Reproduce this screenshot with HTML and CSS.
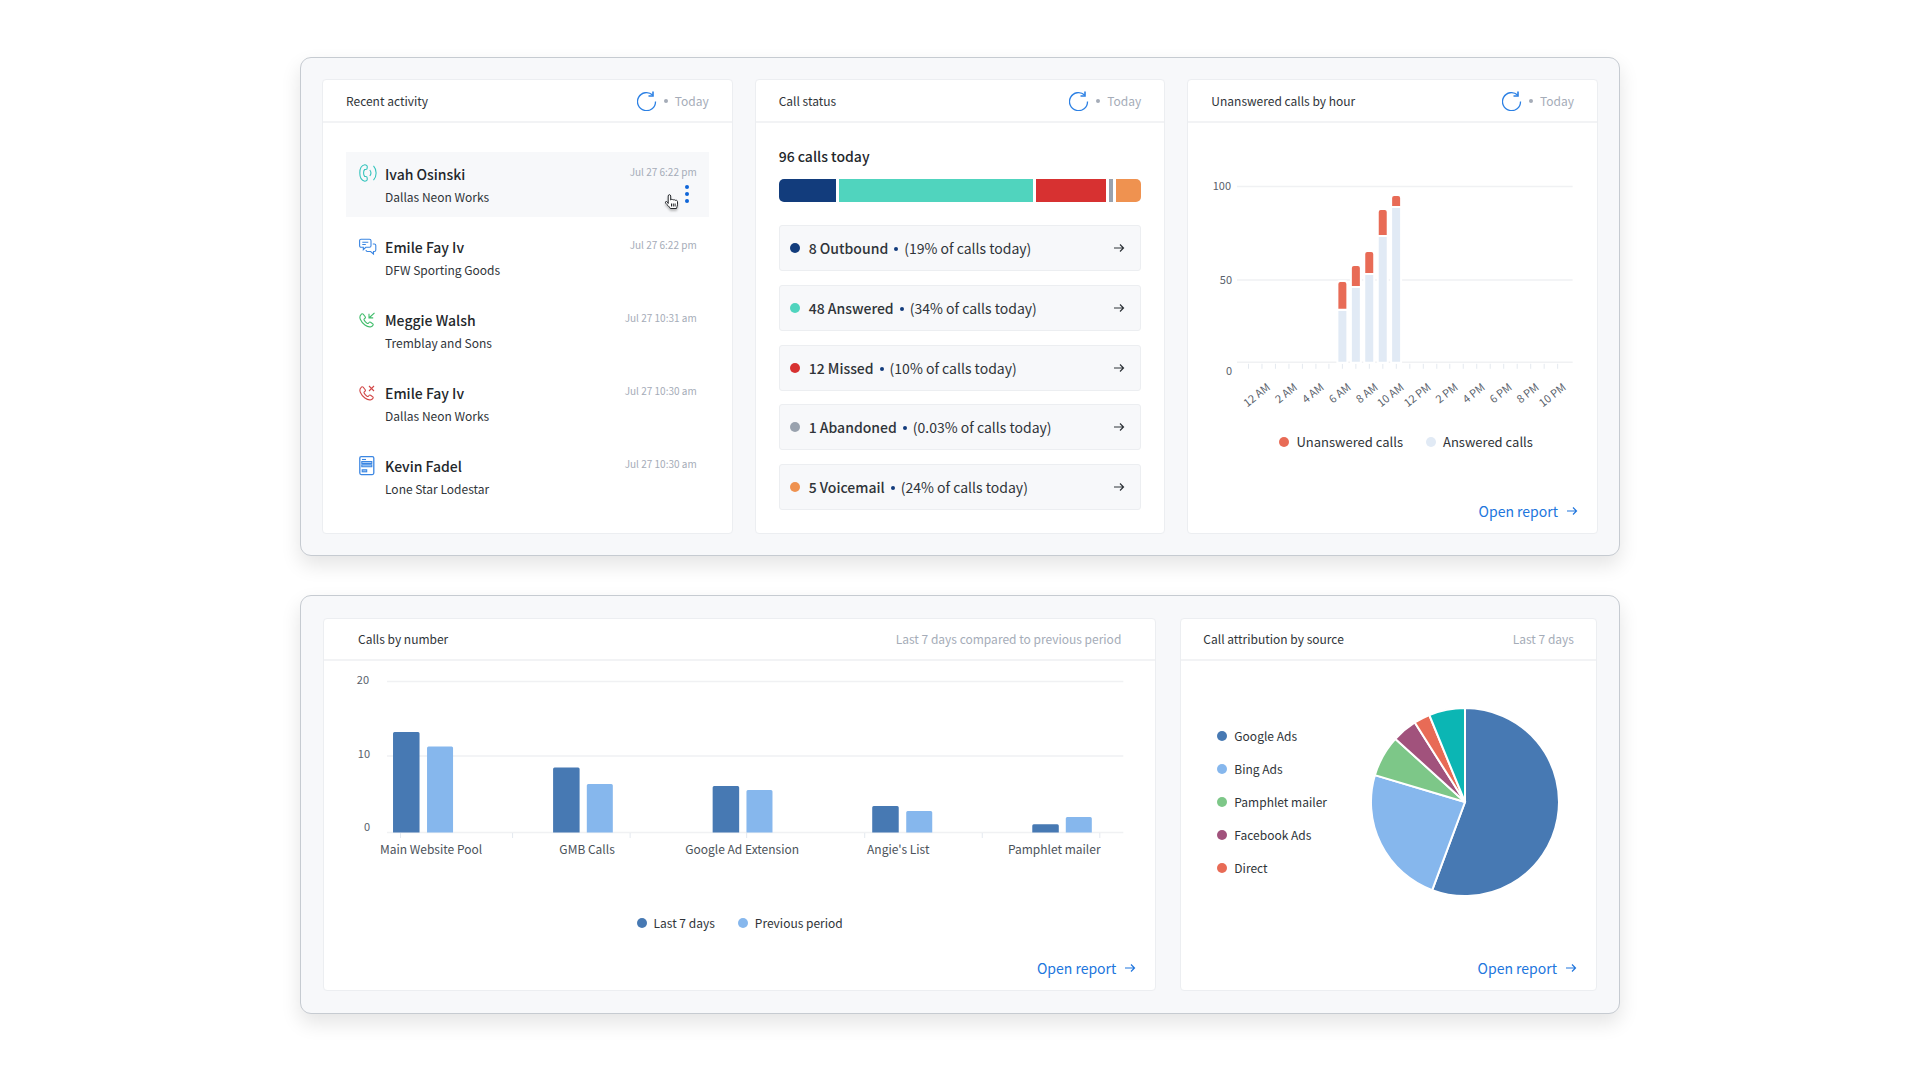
FILE: index.html
```html
<!DOCTYPE html>
<html lang="en">
<head>
<meta charset="utf-8">
<meta name="viewport" content="width=device-width, initial-scale=1">
<title>Call dashboard</title>
<link rel="stylesheet" href="styles.css">
</head>
<body>
<svg class="sprite" aria-hidden="true">
  <symbol id="refresh" viewBox="0 0 20 20"><path d="M18.5 10.5A9 9 0 1 1 15.6 4"/><path d="M16 .5V5h-4.500" stroke-width="1.600"/></symbol>
  <symbol id="arrow" viewBox="0 0 12 10"><path d="M1 5h9.500M7 1.500L10.500 5 7 8.500"/></symbol>
  <symbol id="handset" viewBox="0 0 18 18"><path d="M4.200 3.200c-.7-.6-1.500-.5-2 .1C.8 4.700.5 6.300 1.300 8.200c.9 2.100 2.500 4.200 4.600 5.800 2 1.500 4.300 2.300 6.200 1.700.9-.3 1.700-1 2-1.700.2-.5 0-1-.5-1.300l-2-1.400c-.6-.4-1.200-.3-1.600.2l-.6.7c-.3.400-.7.400-1.100.2-1.200-.7-2.600-2.200-3.200-3.500-.2-.4-.1-.8.200-1.100l.7-.6c.5-.4.500-1 .2-1.500z"/></symbol>
</svg>
<main class="page">
  <section class="panel panel-today" aria-label="Today">
    <article class="card">
      <header class="card-head">
        <h2>Recent activity</h2>
        <div class="period"><button class="icon-button" type="button" aria-label="Refresh recent activity"><svg class="refresh"><use href="#refresh"/></svg></button><i></i><span>Today</span></div>
      </header>
      <ul class="activity">
        <li class="entry active">
          <svg class="entry-icon teal" viewBox="0 0 18 18"><path d="M5.800.8C2.500 1.400.8 5 .8 9s1.700 7.600 5 8.200c.8.100 2.400-.6 2.400-1.400V14c0-.9-.6-1.500-1.500-1.500h-1C4.200 11 4.200 7 5.700 5.500h1c.9 0 1.500-.6 1.500-1.500V2.200C8.200 1.400 6.600.7 5.800.8zM10.800 6c1.400 1.800 1.400 4.200 0 6M14.500 1.800c3.500 3.900 3.500 10.500 0 14.400"/></svg>
          <div class="who"><h3>Ivah Osinski</h3><p>Dallas Neon Works</p></div>
          <div class="when"><time>Jul 27 6:22 pm</time>
            <button class="more" type="button" aria-label="More actions"><svg viewBox="0 0 4 18"><circle cx="2" cy="2" r="2"/><circle cx="2" cy="9" r="2"/><circle cx="2" cy="16" r="2"/></svg></button>
          </div>
          <svg class="pointer" viewBox="0 0 18 18"><path d="M5.200 10.500V3c0-1.800 2.300-1.800 2.500 0v4c.5-.9 2-.8 2.300.1.600-.7 1.900-.5 2.200.3.700-.5 2.300-.1 2.300 1.200v3.200c0 1.600-.9 2.200-1 3.700H7.300C6.500 13.500 4 12 2.700 10.200 1.700 8.500 3.400 7.900 4.300 9z"/><path d="M8.500 10.500v3M10.300 10.500v3M12.100 10.500v3"/></svg>
        </li>
        <li class="entry">
          <svg class="entry-icon blue" viewBox="0 -1 18 18"><path d="M2 1.300h8.500c.8 0 1.500.6 1.500 1.500v5c0 .8-.7 1.500-1.500 1.500H6.800L4.300 11.700V9.300H2C1.200 9.300.6 8.600.6 7.800v-5C.6 1.900 1.200 1.300 2 1.300zM3.300 4.200h6M3.300 6.500h3.500M13.800 6h1.500c.9 0 1.500.7 1.500 1.500V12c0 .8-.6 1.500-1.500 1.500h-.8V16L11.600 13.500H8.500c-.8 0-1.500-.6-1.500-1.500"/></svg>
          <div class="who"><h3>Emile Fay Iv</h3><p>DFW Sporting Goods</p></div>
          <div class="when"><time>Jul 27 6:22 pm</time></div>
        </li>
        <li class="entry">
          <svg class="entry-icon green" viewBox="0 -1 18 18"><use href="#handset" width="18" height="18"/><path d="M15.500 1.800L10.500 6.500M10 2.700v4.200h4.200"/></svg>
          <div class="who"><h3>Meggie Walsh</h3><p>Tremblay and Sons</p></div>
          <div class="when"><time>Jul 27 10:31 am</time></div>
        </li>
        <li class="entry">
          <svg class="entry-icon red" viewBox="0 -1 18 18"><use href="#handset" width="18" height="18"/><path d="M10 2l5 5M15 2l-5 5"/></svg>
          <div class="who"><h3>Emile Fay Iv</h3><p>Dallas Neon Works</p></div>
          <div class="when"><time>Jul 27 10:30 am</time></div>
        </li>
        <li class="entry">
          <svg class="entry-icon blue" viewBox="0 0 18 18"><rect x=".8" y=".6" width="14" height="18" rx="1.500" stroke-width="1.300"/><path d="M3 3.500h4"/><path d="M2.800 5.500h10v2h-10zM2.800 8.800h10v2h-10z" fill="#a9cbf5"/><rect x="3.200" y="13.800" width="4.500" height="2" fill="#a9cbf5"/></svg>
          <div class="who"><h3>Kevin Fadel</h3><p>Lone Star Lodestar</p></div>
          <div class="when"><time>Jul 27 10:30 am</time></div>
        </li>
      </ul>
    </article>

    <article class="card">
      <header class="card-head">
        <h2>Call status</h2>
        <div class="period"><button class="icon-button" type="button" aria-label="Refresh call status"><svg class="refresh"><use href="#refresh"/></svg></button><i></i><span>Today</span></div>
      </header>
      <div class="status">
        <h3>96 calls today</h3>
        <div class="split">
          <span class="navy" style="flex-grow:58"></span><span class="mint" style="flex-grow:194"></span><span class="crimson" style="flex-grow:71"></span><span class="grey" style="flex-grow:4"></span><span class="amber" style="flex-grow:25"></span>
        </div>
        <ul class="status-list">
          <li><a href="#outbound"><i class="dot navy"></i><b>8 Outbound</b><i class="sep"></i><span>(19% of calls today)</span><svg class="arrow"><use href="#arrow"/></svg></a></li>
          <li><a href="#answered"><i class="dot mint"></i><b>48 Answered</b><i class="sep"></i><span>(34% of calls today)</span><svg class="arrow"><use href="#arrow"/></svg></a></li>
          <li><a href="#missed"><i class="dot crimson"></i><b>12 Missed</b><i class="sep"></i><span>(10% of calls today)</span><svg class="arrow"><use href="#arrow"/></svg></a></li>
          <li><a href="#abandoned"><i class="dot grey"></i><b>1 Abandoned</b><i class="sep"></i><span>(0.03% of calls today)</span><svg class="arrow"><use href="#arrow"/></svg></a></li>
          <li><a href="#voicemail"><i class="dot amber"></i><b>5 Voicemail</b><i class="sep"></i><span>(24% of calls today)</span><svg class="arrow"><use href="#arrow"/></svg></a></li>
        </ul>
      </div>
    </article>

    <article class="card">
      <header class="card-head">
        <h2>Unanswered calls by hour</h2>
        <div class="period"><button class="icon-button" type="button" aria-label="Refresh unanswered calls"><svg class="refresh"><use href="#refresh"/></svg></button><i></i><span>Today</span></div>
      </header>
      <div class="hours">
        <svg class="chart" viewBox="0 0 363 250" role="img" aria-label="Unanswered and answered calls by hour">
          <path class="grid" d="M26 24.500H362M26 118H362M26 200.500H362"/>
          <path class="ticks" d="M37.500 202v5M51 202v5M64.500 202v5M78 202v5M91.500 202v5M105 202v5M118 202v5M131.500 202v5M145 202v5M158.500 202v5M172 202v5M185.500 202v5M199 202v5M212.500 202v5M226 202v5M239 202v5M252.500 202v5M266 202v5M279.500 202v5M293 202v5M306.500 202v5M320 202v5M333.500 202v5M347 202v5"/>
          <g class="axis end"><text x="20" y="28">100</text><text x="21" y="122">50</text><text x="21" y="213">0</text></g>
          <g class="answered">
            <path d="M126.500 148h10v53h-10zM140 125h10v76h-10zM153.400 112h10v89h-10zM166.900 74h10v127h-10zM180.300 45h10v156h-10z"/>
          </g>
          <g class="missed">
            <path d="M126.500 148v-26q0-3 3-3h4q3 0 3 3v26zM140 125v-19q0-3 3-3h4q3 0 3 3v19zM153.400 112v-20q0-3 3-3h4q3 0 3 3v20zM166.900 74v-24q0-3 3-3h4q3 0 3 3v24zM180.300 45v-9q0-3 3-3h4q3 0 3 3v9z"/>
          </g>
          <g class="axis end">
            <text transform="translate(60 227) rotate(-38)">12 AM</text><text transform="translate(87 227) rotate(-38)">2 AM</text><text transform="translate(114 227) rotate(-38)">4 AM</text><text transform="translate(141 227) rotate(-38)">6 AM</text><text transform="translate(168 227) rotate(-38)">8 AM</text><text transform="translate(194 227) rotate(-38)">10 AM</text><text transform="translate(221 227) rotate(-38)">12 PM</text><text transform="translate(248 227) rotate(-38)">2 PM</text><text transform="translate(275 227) rotate(-38)">4 PM</text><text transform="translate(302 227) rotate(-38)">6 PM</text><text transform="translate(329 227) rotate(-38)">8 PM</text><text transform="translate(356 227) rotate(-38)">10 PM</text>
          </g>
        </svg>
        <ul class="legend large"><li><i class="dot coral"></i>Unanswered calls</li><li><i class="dot pale"></i>Answered calls</li></ul>
      </div>
      <a class="report" href="#hours">Open report<svg class="arrow"><use href="#arrow"/></svg></a>
    </article>
  </section>

  <section class="panel panel-week" aria-label="Last 7 days">
    <article class="card wide">
      <header class="card-head"><h2>Calls by number</h2><div class="period">Last 7 days compared to previous period</div></header>
      <div class="numbers">
        <svg class="chart" viewBox="0 0 763 200" role="img" aria-label="Calls by number">
          <path class="grid" d="M29 20.500H765M29 95H765M29 171.500H765"/>
          <path class="ticks" d="M42.500 172v5M154.500 172v5M272 172v5M388.500 172v5M506.500 172v5M624 172v5M741.500 172v5"/>
          <g class="axis end"><text x="11" y="23">20</text><text x="12" y="97">10</text><text x="12" y="170">0</text></g>
          <g class="current"><path d="M35 171.500v-99q0-1.500 1.500-1.500h23.500q1.500 0 1.500 1.500v99zM195 171.500v-63.500q0-1.500 1.500-1.500h23.500q1.500 0 1.500 1.500v63.500zM354.500 171.500v-45q0-1.500 1.500-1.500h23.500q1.500 0 1.500 1.500v45zM514 171.500v-25q0-1.500 1.500-1.500h23.500q1.500 0 1.500 1.500v25zM674 171.500v-6.700q0-1.500 1.500-1.500h23.500q1.500 0 1.500 1.500v6.700z"/></g>
          <g class="previous"><path d="M69 171.500v-84.500q0-1.500 1.500-1.500h23q1.500 0 1.500 1.500v84.500zM228.700 171.500v-47q0-1.500 1.500-1.500h23q1.500 0 1.500 1.500v47zM388.300 171.500v-41q0-1.500 1.500-1.500h23q1.500 0 1.500 1.500v41zM548 171.500v-20q0-1.500 1.500-1.500h23q1.500 0 1.500 1.500v20zM707.500 171.500v-14q0-1.500 1.500-1.500h23q1.500 0 1.500 1.500v14z"/></g>
          <g class="names"><text x="73" y="193">Main Website Pool</text><text x="229" y="193">GMB Calls</text><text x="384" y="193">Google Ad Extension</text><text x="540" y="193">Angie's List</text><text x="696" y="193">Pamphlet mailer</text></g>
        </svg>
        <ul class="legend"><li><i class="dot steel"></i>Last 7 days</li><li><i class="dot sky"></i>Previous period</li></ul>
      </div>
      <a class="report" href="#numbers">Open report<svg class="arrow"><use href="#arrow"/></svg></a>
    </article>

    <article class="card">
      <header class="card-head"><h2>Call attribution by source</h2><div class="period">Last 7 days</div></header>
      <div class="sources">
        <ul class="source-list"><li><i class="dot steel"></i>Google Ads</li><li><i class="dot sky"></i>Bing Ads</li><li><i class="dot leaf"></i>Pamphlet mailer</li><li><i class="dot plum"></i>Facebook Ads</li><li><i class="dot coral"></i>Direct</li></ul>
        <svg class="pie" viewBox="-94 -94 188 188" role="img" aria-label="Call attribution by source">
          <path fill="#4779b3" d="M0 0V-94A94 94 0 1 1 -32.800 88.100z"/>
          <path fill="#86b7ed" d="M0 0L-32.800 88.100A94 94 0 0 1 -90.100 -26.900z"/>
          <path fill="#7dc788" d="M0 0L-90.100 -26.900A94 94 0 0 1 -69.600 -63.100z"/>
          <path fill="#a1527c" d="M0 0L-69.600 -63.100A94 94 0 0 1 -50.200 -79.500z"/>
          <path fill="#e86b56" d="M0 0L-50.200 -79.500A94 94 0 0 1 -35.700 -87z"/>
          <path fill="#0bb6b4" d="M0 0L-35.700 -87A94 94 0 0 1 0 -94z"/>
        </svg>
      </div>
      <a class="report" href="#sources">Open report<svg class="arrow"><use href="#arrow"/></svg></a>
    </article>
  </section>
</main>
</body>
</html>
```
FILE: styles.css
```css
* { box-sizing: border-box; }
body {
  margin: 0;
  background: #fff;
  color: #2f3439;
  font: 12px/20px "Noto Sans CJK SC", "Noto Sans", sans-serif;
}
h2, h3, p, ul { margin: 0; padding: 0; }
ul { list-style: none; }
button { padding: 0; border: 0; background: none; cursor: pointer; }
a { color: inherit; text-decoration: none; }
svg { display: block; fill: none; }
.sprite { position: absolute; width: 0; height: 0; }

.page {
  display: flex;
  flex-direction: column;
  gap: 39px;
  max-width: 1368px;
  margin: 0 auto;
  padding: 57px 24px;
}
.panel {
  display: grid;
  border: 1px solid #c6cbd1;
  border-radius: 11px;
  background: #f7f8fa;
  box-shadow: 0 9px 20px rgba(0, 0, 0, .11);
}
.panel-today { grid-template-columns: repeat(3, 1fr); gap: 22px; padding: 21px; }
.panel-week { grid-template-columns: 2fr 1fr; gap: 24px; padding: 22px; }

.card {
  display: flex;
  flex-direction: column;
  min-width: 0;
  border: 1px solid #eceef1;
  border-radius: 4px;
  background: #fff;
}
.panel-today .card { min-height: 455px; }
.panel-week .card { min-height: 373px; }
.card-head {
  display: flex;
  align-items: center;
  justify-content: space-between;
  height: 43px;
  padding: 0 23px;
  border-bottom: 2px solid #f2f3f5;
}
.panel-week .card-head { height: 42px; padding: 0 22px; }
.panel-week .wide .card-head { padding: 0 34px; }
h2 { font-size: 12px; font-weight: 400; }
.period { display: flex; align-items: center; color: #a5acb8; }
.period i { width: 4px; height: 4px; margin: 0 7px; border-radius: 50%; background: #a5acb8; }
.refresh { width: 20px; height: 20px; stroke: #2c80e4; stroke-width: 1.300; }

.activity { display: flex; flex-direction: column; gap: 8px; padding: 29px 23px 20px; }
.entry { position: relative; display: flex; height: 65px; padding: 12px; }
.entry.active { background: #f7f8fa; }
.entry-icon { width: 18px; height: 18px; margin: 0 8px 0 1px; stroke: currentColor; stroke-width: 1.100; overflow: visible; }
.teal { color: #35c4bd; }
.blue { color: #3b86e2; }
.green { color: #42bd6c; }
.red { color: #d24848; }
.who { flex: 1; }
h3 { color: #23272b; font-size: 14px; font-weight: 500; }
.who p { margin-top: 3px; }
.when { display: flex; flex-direction: column; align-items: flex-end; color: #a5acb8; font-size: 10px; line-height: 16px; }
.more { margin: 5px 8px 0 0; }
.more svg { width: 4px; height: 18px; fill: #0f66d8; }
.pointer { position: absolute; right: 28px; bottom: 6px; width: 18px; height: 18px; fill: #fff; stroke: #26292d; filter: drop-shadow(0 2px 1px rgba(0, 0, 0, .25)); }

.status { display: flex; flex: 1; flex-direction: column; padding: 23px; }
.split { display: flex; gap: 3px; height: 23px; margin-top: 13px; border-radius: 5px; overflow: hidden; }
.split span { flex-basis: 0; }
.status-list { display: flex; flex: 1; flex-direction: column; justify-content: space-between; margin-top: 23px; }
.status-list a {
  display: flex;
  align-items: center;
  height: 46px;
  padding: 0 15px 0 10px;
  border: 1px solid #eceef1;
  border-radius: 3px;
  background: #f7f8fa;
  font-size: 14px;
}
.status-list b { margin-left: 9px; font-weight: 500; }
.sep { width: 4px; height: 4px; margin: 2px 6px 0; border-radius: 50%; background: #123c7c; }
.arrow { width: 12px; height: 10px; stroke: currentColor; stroke-width: 1.200; }
.status-list .arrow { margin-left: auto; }

.dot { flex: none; width: 10px; height: 10px; border-radius: 50%; }
.navy { background: #123c7c; }
.mint { background: #50d4be; }
.crimson { background: #d73131; }
.grey { background: #99a2ae; }
.amber { background: #ef9250; }
.coral { background: #e86b56; }
.pale { background: #e1eaf5; }
.steel { background: #4779b3; }
.sky { background: #86b7ed; }
.leaf { background: #7dc788; }
.plum { background: #a1527c; }

.chart { width: 100%; height: auto; overflow: visible; }
.grid { stroke: #f0f1f3; stroke-width: 1.500; }
.ticks { stroke: #e4e9ef; }
.axis { fill: #59616b; font-size: 11px; }
.end { text-anchor: end; }
.names { fill: #4b525a; font-size: 12px; text-anchor: middle; }
.answered, .missed { stroke: #fff; stroke-width: 2; }
.answered { fill: #e1eaf5; }
.missed { fill: #e86b56; }
.current { fill: #4779b3; }
.previous { fill: #86b7ed; }

.hours { padding: 39px 23px 0; }
.legend { display: flex; justify-content: center; gap: 23px; }
.legend li { display: flex; align-items: center; gap: 7px; }
.legend.large { padding: 20px 0 0 27px; font-size: 13px; }
.numbers { padding: 0 34px; }
.numbers .legend { padding-top: 52px; }
.report {
  display: flex;
  align-items: center;
  align-self: flex-end;
  gap: 8px;
  margin: auto 19px 12px 0;
  color: #2176dd;
  font-size: 14px;
}
.sources { display: flex; align-items: center; justify-content: space-between; padding: 47px 37px 0 36px; }
.source-list { display: flex; flex-direction: column; gap: 13px; }
.source-list li { display: flex; align-items: center; gap: 7px; }
.pie { width: 188px; height: 188px; stroke: #fff; stroke-width: 2; }
```
